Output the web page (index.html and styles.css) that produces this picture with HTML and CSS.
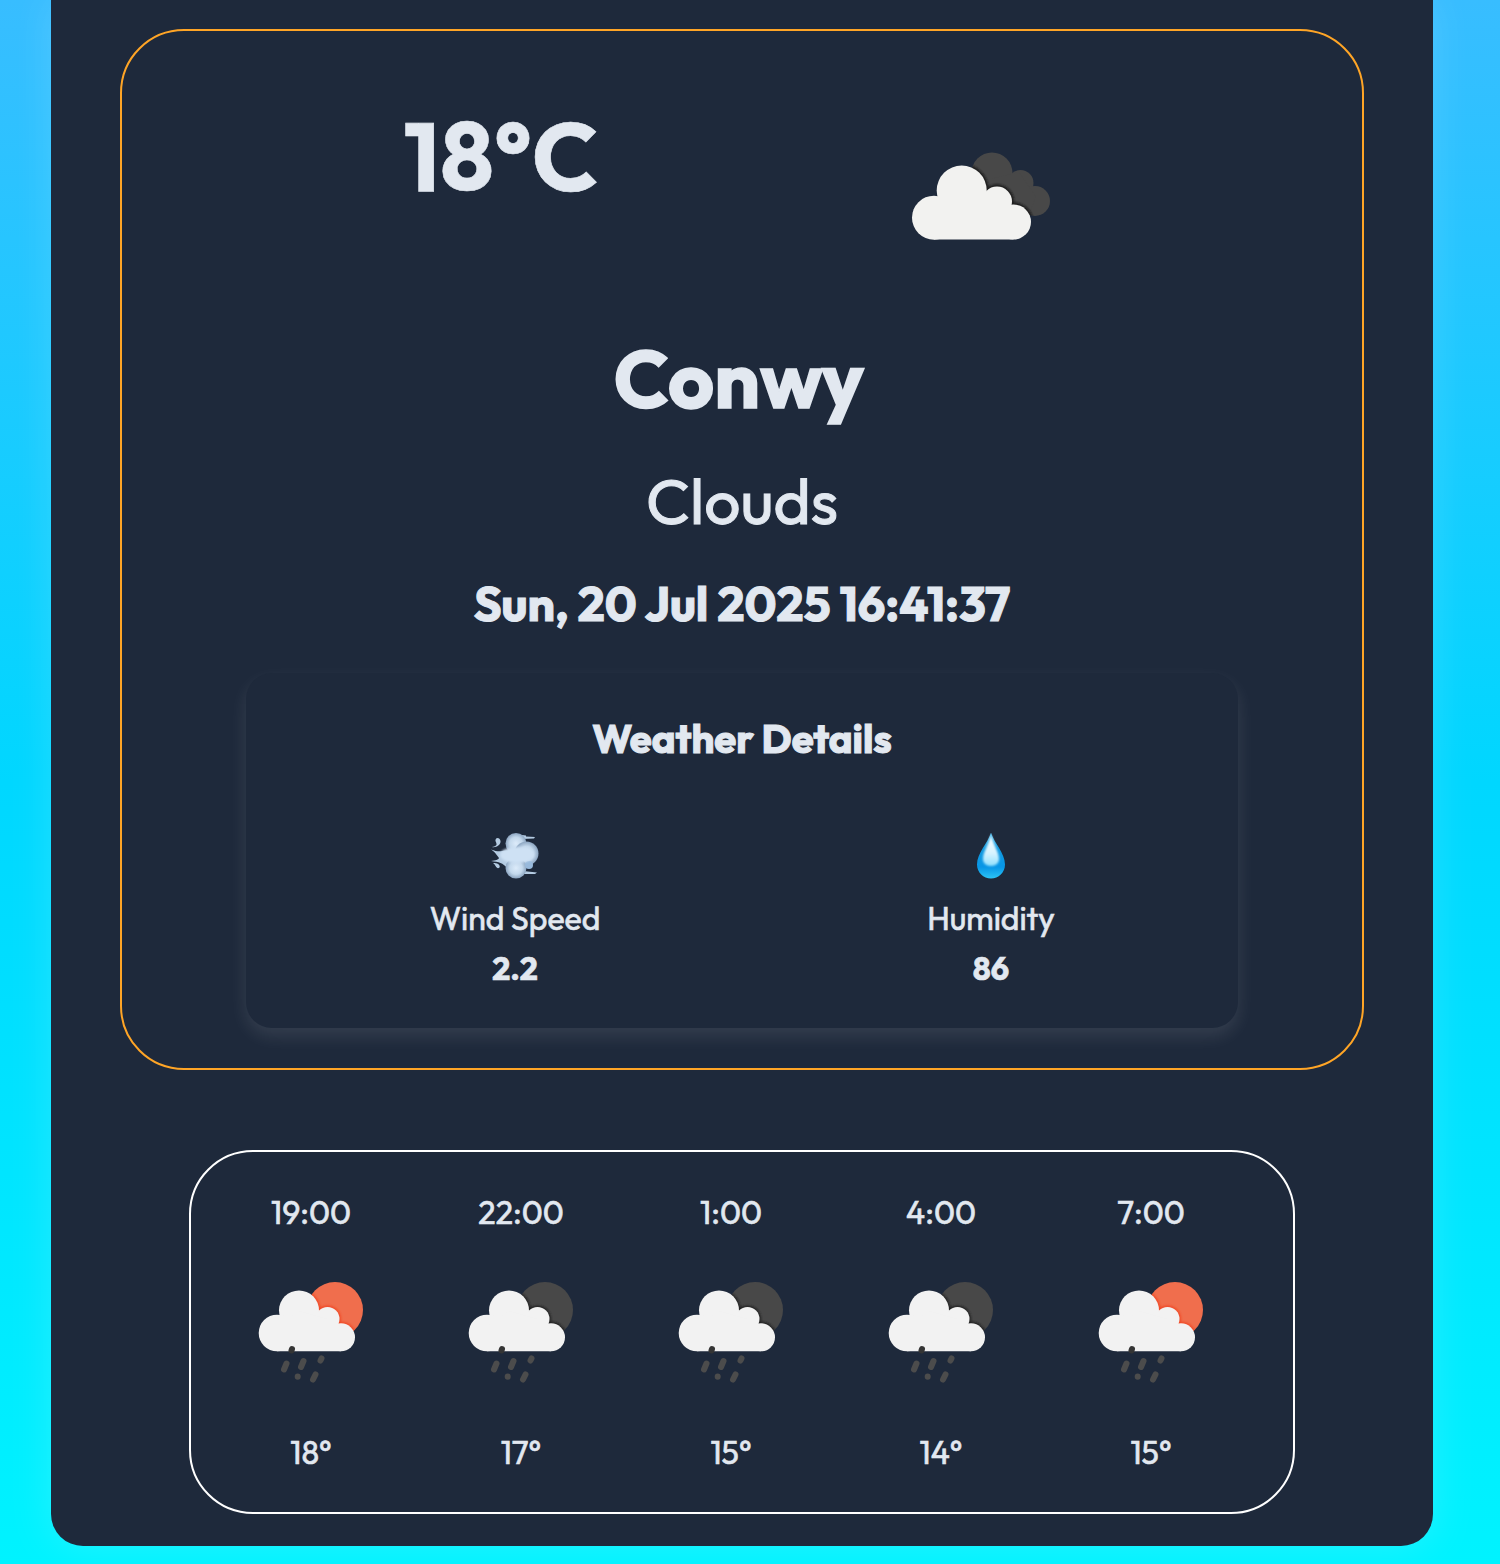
FILE: index.html
```
<!DOCTYPE html>
<html lang="en">
<head>
<meta charset="utf-8">
<title>Weather</title>
<link rel="stylesheet" href="styles.css">
</head>
<body>
<svg class="symbols" aria-hidden="true">
  <defs>
    <linearGradient id="drop-outer" x1="0" y1="0" x2="0" y2="1"><stop offset="0" stop-color="#5bc2f0"/><stop offset=".35" stop-color="#139ae0"/><stop offset=".75" stop-color="#0796e6"/><stop offset="1" stop-color="#2cc4f5"/></linearGradient>
    <linearGradient id="drop-inner" x1="0" y1="0" x2="0" y2="1"><stop offset="0" stop-color="#fff"/><stop offset=".6" stop-color="#d5f3ff"/><stop offset="1" stop-color="#8fe0fd"/></linearGradient>
    <radialGradient id="puff"><stop offset="0" stop-color="#dcebfa"/><stop offset=".6" stop-color="#c3d8ec"/><stop offset="1" stop-color="#8ba4c0"/></radialGradient>
    <filter id="soft" x="-20%" y="-20%" width="140%" height="140%"><feGaussianBlur stdDeviation=".9"/></filter>
    <clipPath id="disc-area"><circle cx="77" cy="29" r="28"/></clipPath>
    <clipPath id="back-cloud-area"><circle cx="81" cy="21" r="20.500"/><circle cx="109.500" cy="31" r="13"/><circle cx="124" cy="49" r="15"/><path d="M75 28L108 20L125 45L118 62L90 58Z"/></clipPath>
    <g id="cloud"><circle cx="41" cy="29.500" r="20"/><circle cx="19" cy="52" r="18.300"/><circle cx="69.500" cy="38" r="12"/><circle cx="83" cy="56.300" r="14"/><path d="M19 70.300V45L41 30L69 38L83 50V70.300Z"/></g>
    <g id="large-cloud"><circle cx="50.700" cy="38.500" r="25"/><circle cx="23" cy="65.700" r="22"/><circle cx="86" cy="49.500" r="15"/><circle cx="102.500" cy="70" r="17.500"/><path d="M23 87.600V55L50 40L86 49L102.500 60V87.600Z"/></g>
    <symbol id="showers" viewBox="0 0 106 104">
      <circle cx="77" cy="29" r="28" fill="var(--disc)"/>
      <g clip-path="url(#disc-area)"><use href="#cloud" fill="none" stroke="var(--edge)" stroke-width="3" filter="url(#soft)"/></g>
      <use href="#cloud" fill="#f2f2f2"/>
      <g fill="none" stroke="#4c4c4c" stroke-width="6" stroke-linecap="round"><path stroke="#353535" d="M34 68L33.500 69.500"/><path d="M28.500 82.500L26 88.500M45.500 80L43 86M63.500 77.500L62.500 79.500M39.700 95.500V95.700M57.500 93.500L55 98.500"/></g>
    </symbol>
  </defs>
</svg>
<main class="app">
  <section class="current">
    <div class="summary">
      <div class="temperature"><span>18°C</span></div>
      <div class="condition-icon">
        <svg width="140" height="90" viewBox="0 0 140 90">
          <g fill="#484848"><circle cx="81" cy="21" r="20.500"/><circle cx="109.500" cy="31" r="13"/><circle cx="124" cy="49" r="15"/><path d="M75 28L108 20L125 45L118 62L90 58Z"/></g>
          <g clip-path="url(#back-cloud-area)"><use href="#large-cloud" fill="none" stroke="#1c1c1c" stroke-width="4" filter="url(#soft)"/></g>
          <use href="#large-cloud" fill="#f2f2f0"/>
        </svg>
      </div>
    </div>
    <h1 class="city">Conwy</h1>
    <p class="condition">Clouds</p>
    <p class="date">Sun, 20 Jul 2025 16:41:37</p>
    <div class="details">
      <h2 class="details-title">Weather Details</h2>
      <div class="metrics">
        <div class="metric">
          <svg class="metric-icon" width="48" height="48" viewBox="0 0 48 48">
            <g fill="#b4cbe2"><path d="M0 16.500C9 20 11 17 17 18L30 14V36L16 35C12 30 8 29 0 28C5 27 7 27 8 25C5 21 3 18 0 16.500ZM1 14C8 13 5 10 4.500 8C4 4 9 4 9.500 8C10 12 5 15 1 14ZM2 30C8 30 10 33 8 35C5 36 5 32 2 30ZM27 1.500L35 2.500L35 3.500L44 4L43 5.500L31 6ZM32 38L46 39.500L44 41L30 41Z"/></g>
            <circle cx="25" cy="10.500" r="10.500" fill="url(#puff)"/><circle cx="35.500" cy="20.500" r="12" fill="url(#puff)"/><circle cx="25" cy="35" r="10.500" fill="url(#puff)"/><circle cx="38" cy="32" r="4" fill="#98b9db"/>
            <ellipse cx="26" cy="22" rx="17" ry="8" fill="#cee1f4" filter="url(#soft)"/>
          </svg>
          <span class="metric-name">Wind Speed</span>
          <strong class="metric-value">2.2</strong>
        </div>
        <div class="metric">
          <svg class="metric-icon" width="48" height="48" viewBox="0 0 48 48">
            <path d="M24 -.5C27 10 38 20 38 31.500C38 39.500 31.500 45.500 24 45.500S10 39.500 10 31.500C10 20 21 10 24 -.5Z" fill="url(#drop-outer)"/>
            <path d="M24 2C26 11 32 19 32 26C32 30 29 33 24 33S16 30 16 26C16 19 22 11 24 2Z" fill="url(#drop-inner)" filter="url(#soft)"/>
          </svg>
          <span class="metric-name">Humidity</span>
          <strong class="metric-value">86</strong>
        </div>
      </div>
    </div>
  </section>
  <section class="forecast">
    <div class="hour day"><span class="time">19:00</span><svg width="106" height="104"><use href="#showers"/></svg><span class="degrees">18°</span></div>
    <div class="hour"><span class="time">22:00</span><svg width="106" height="104"><use href="#showers"/></svg><span class="degrees">17°</span></div>
    <div class="hour"><span class="time">1:00</span><svg width="106" height="104"><use href="#showers"/></svg><span class="degrees">15°</span></div>
    <div class="hour"><span class="time">4:00</span><svg width="106" height="104"><use href="#showers"/></svg><span class="degrees">14°</span></div>
    <div class="hour day"><span class="time">7:00</span><svg width="106" height="104"><use href="#showers"/></svg><span class="degrees">15°</span></div>
  </section>
</main>
</body>
</html>
```
FILE: styles.css
```
* { box-sizing: border-box; }
body {
  margin: 0;
  height: 1564px;
  overflow: hidden;
  padding-left: 51px;
  font-family: Outfit, Inter, sans-serif;
  color: #e2e8f0;
  -webkit-text-stroke: .6px #e2e8f0;
  background: linear-gradient(180deg, #38bdff 0%, #00d7ff 50%, #00f3ff 100%);
}
h1, h2, p { margin: 0; }
.symbols { position: absolute; width: 0; height: 0; }
.app {
  width: 1382px;
  height: 1546px;
  padding: 29px 69px 0;
  background: #1e293b;
  border-radius: 0 0 32px 32px;
  box-shadow: 0 0 40px rgba(255, 255, 255, .15);
}
.current {
  width: 1244px;
  height: 1041px;
  border: 2px solid #ffa526;
  border-radius: 64px;
  display: flex;
  flex-direction: column;
  align-items: center;
  text-align: center;
  white-space: nowrap;
}
.summary { width: 960px; height: 299px; display: grid; grid-template-columns: 1fr 1fr; justify-items: center; }
.temperature { padding: 65px 2px 0 0; font-size: 96px; line-height: 120px; font-weight: 700; }
.condition-icon { padding: 121px 2px 0 0; }
.condition-icon svg { display: block; }
.city { height: 100px; padding-right: 6px; font-size: 80px; line-height: 97px; font-weight: 700; -webkit-text-stroke-width: 1.500px; }
.condition { height: 80px; margin-top: 31px; font-size: 64px; line-height: 79px; font-weight: 400; -webkit-text-stroke-width: 1px; }
.date { height: 60px; margin-top: 33px; font-size: 48px; line-height: 59px; font-weight: 700; -webkit-text-stroke-width: 1px; }
.details {
  width: 992px;
  height: 355px;
  margin-top: 39px;
  padding-top: 40px;
  border-radius: 26px;
  background: #1e293b;
  box-shadow: 0 8px 18px rgba(255, 255, 255, .1);
}
.details-title { font-size: 40px; line-height: 50px; font-weight: 700; -webkit-text-stroke-width: 1px; }
.metrics { display: grid; grid-template-columns: 1fr 1fr; padding: 70px 9px 0 31px; }
.metric { display: flex; flex-direction: column; align-items: center; }
.metric-icon { display: block; }
.metric-name { margin-top: 17px; font-size: 32px; line-height: 40px; font-weight: 400; }
.metric-value { margin-top: 10px; font-size: 32px; line-height: 40px; font-weight: 700; }
.forecast {
  width: 1106px;
  height: 364px;
  margin: 80px auto 0;
  padding: 40px 37px 0 15px;
  border: 2px solid #fff;
  border-radius: 64px;
  display: grid;
  grid-template-columns: repeat(5, 210px);
}
.hour { --disc: #484848; --edge: #222; display: flex; flex-direction: column; align-items: center; font-size: 32px; line-height: 40px; }
.day { --disc: #f06e4d; --edge: #f04a26; }
.hour svg { display: block; margin: 49px 0 47px; }
.time, .degrees { font-weight: 400; }
```
